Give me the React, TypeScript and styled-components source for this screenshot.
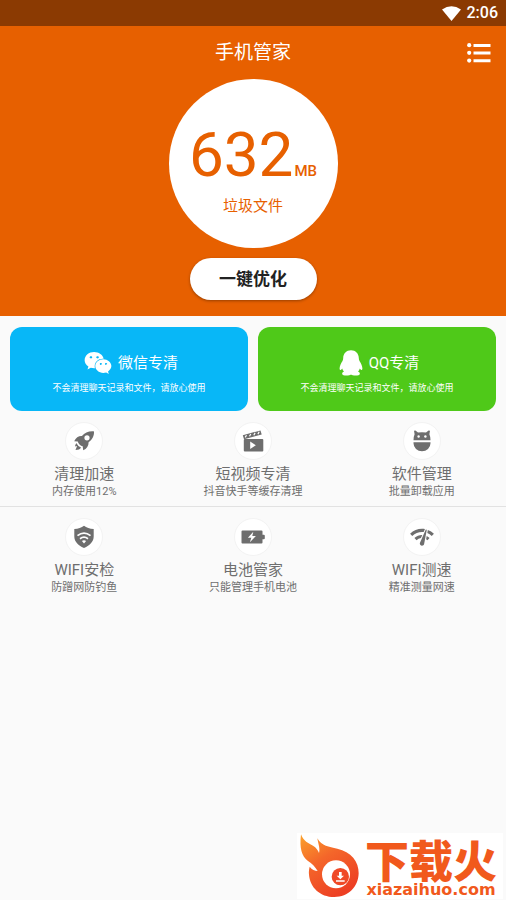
import React from "react";
import styled, { createGlobalStyle } from "styled-components";
import { FaWeixin } from "react-icons/fa";
import { MdNetworkCheck } from "react-icons/md";

const GlobalStyle = createGlobalStyle`
  *, *::before, *::after { box-sizing: border-box; }
  body {
    margin: 0;
    background: #fafafa;
    font-family: Roboto, "Noto Sans CJK SC", sans-serif;
  }
  button { font: inherit; border: 0; padding: 0; cursor: pointer; }
  h1, h2, p { margin: 0; font-weight: 400; }
`;

const Page = styled.div`
  min-height: 100vh;
  display: flex;
  flex-direction: column;
`;

const StatusBar = styled.div`
  height: 26px;
  padding: 0 8px;
  display: flex;
  align-items: center;
  justify-content: flex-end;
  gap: 6px;
  background: #8b3a02;
  color: #fff;
  font-size: 16px;
  font-weight: 500;
  line-height: 28px;
`;

const Hero = styled.header`
  display: flex;
  flex-direction: column;
  align-items: center;
  padding-bottom: 16px;
  background: #e76000;
`;

const TitleBar = styled.div`
  width: 100%;
  height: 53px;
  padding: 0 14px;
  display: grid;
  grid-template-columns: 1fr auto 1fr;
  align-items: center;
  color: #fff;
`;

const Title = styled.h1`
  grid-column: 2;
  font-size: 19px;
  line-height: 28px;
`;

const MenuButton = styled.button`
  justify-self: end;
  width: 26px;
  height: 24px;
  display: grid;
  place-items: center;
  background: none;
  color: #fff;
`;

const Gauge = styled.section`
  width: 169px;
  height: 169px;
  padding-top: 40px;
  display: flex;
  flex-direction: column;
  align-items: center;
  border-radius: 50%;
  background: #fff;
  color: #e76000;
`;

const Amount = styled.div`
  display: flex;
  align-items: baseline;
  gap: 1px;
  font-size: 62px;
  line-height: 72px;
`;

const Unit = styled.span`
  font-size: 15px;
  font-weight: 500;
  line-height: 20px;
`;

const GaugeLabel = styled.p`
  margin-top: 5px;
  font-size: 15px;
  line-height: 20px;
`;

const OptimizeButton = styled.button`
  width: 127px;
  height: 42px;
  margin-top: 10px;
  border-radius: 21px;
  background: #fff;
  color: #222;
  font-size: 17px;
  font-weight: 700;
  line-height: 42px;
  box-shadow: 0 1px 3px rgba(0, 0, 0, 0.35);
`;

const Cards = styled.section`
  display: grid;
  grid-template-columns: 1fr 1fr;
  gap: 10px;
  padding: 11px 10px 0;
`;

const Card = styled.button<{ $tone: string }>`
  height: 84px;
  padding-top: 8px;
  display: flex;
  flex-direction: column;
  align-items: center;
  justify-content: center;
  border-radius: 12px;
  background: ${(p) => p.$tone};
  color: #fff;
`;

const CardTitle = styled.span`
  display: flex;
  align-items: center;
  gap: 6px;
  padding-left: 4px;
  font-size: 15px;
  line-height: 30px;
`;

const CardNote = styled.span`
  font-size: 9px;
  line-height: 20px;
`;

const ToolRow = styled.section<{ $divided?: boolean }>`
  display: grid;
  grid-template-columns: repeat(3, 1fr);
  padding: 11px 0 6px;
  border-bottom: 1px solid ${(p) => (p.$divided ? "#e2e2e2" : "transparent")};
`;

const Tool = styled.button`
  display: flex;
  flex-direction: column;
  align-items: center;
  background: none;
  color: #6e6e6e;
`;

const ToolIcon = styled.span`
  width: 38px;
  height: 38px;
  margin-bottom: 4px;
  display: grid;
  place-items: center;
  border: 1px solid #f3f3f3;
  border-radius: 50%;
  background: #fff;
`;

const ToolName = styled.span`
  font-size: 15px;
  line-height: 20px;
`;

const ToolNote = styled.span`
  font-size: 11px;
  line-height: 16px;
`;

const Brand = styled.footer`
  align-self: flex-end;
  margin: auto 3px 1px 0;
  height: 66px;
  padding-right: 2px;
  display: flex;
  background: #fff;
  color: #f1591c;
`;

const BrandText = styled.div`
  display: flex;
  flex-direction: column;
  align-items: center;
  padding: 4px 4px 0;
`;

const BrandName = styled.strong`
  font-family: "Noto Sans CJK SC", sans-serif;
  font-size: 44px;
  font-weight: 900;
  line-height: 44px;
`;

const BrandUrl = styled.span`
  font-family: "DejaVu Sans", sans-serif;
  font-size: 16px;
  font-weight: 700;
  line-height: 18px;
`;

const WifiIcon = () => (
  <svg width="19" height="15" viewBox="0 0 19 15" fill="currentColor" aria-hidden="true">
    <path d="M0 3.4Q9.500 -3 19 3.400L9.500 15Z" />
  </svg>
);

const ListIcon = () => (
  <svg width="24" height="20" viewBox="0 0 24 20" fill="currentColor" aria-hidden="true">
    <circle cx="2.200" cy="2.200" r="2.100" />
    <circle cx="2.200" cy="9.800" r="2.100" />
    <circle cx="2.200" cy="17.600" r="2.100" />
    <path d="M6.500 1h17v3h-17zM6.500 8.400h17v3h-17zM6.500 16.200h17v3h-17z" />
  </svg>
);

const PenguinIcon = () => (
  <svg width="24" height="26" viewBox="0 0 24 26" fill="currentColor" aria-hidden="true">
    <path d="M12 .3C7.400.3 4.300 3.600 4.200 8c0 1.200-.2 2.100-.7 3.100C2 13.300.6 16.300.6 18.600c0 1.900 1 2 2.600-.2.3 1.200.9 2.300 1.800 3.200-1.300.6-2 1.300-1.800 2.300.2 1.300 1.900 1.700 4.300 1.700 2.100 0 3.600-.4 4.500-1 .9.600 2.400 1 4.500 1 2.400 0 4.100-.4 4.300-1.700.2-1-.5-1.700-1.800-2.300.9-.9 1.500-2 1.800-3.200 1.600 2.200 2.600 2.100 2.600.2 0-2.300-1.400-5.300-2.900-7.500-.5-1-.7-1.900-.7-3.100C19.700 3.600 16.600.3 12 .3z" />
  </svg>
);

const RocketIcon = () => (
  <svg width="22" height="22" viewBox="0 0 22 22" fill="currentColor" aria-hidden="true">
    <path
      fillRule="evenodd"
      d="M21 1.400C15.600 1 11.800 2.700 8.900 6 5.900 5.700 2.900 7.500 1.200 11.200l3.600.3c.2 1 .8 2 1.700 2.900 1 1 2 1.600 3.200 1.800l.5 4.100c3.600-1.500 5.500-4.500 5.400-8.100C19 9.500 21.300 6.300 21 1.400zM14 5.200a2.600 2.600 0 1 1 0 5.200 2.600 2.600 0 0 1 0-5.200z"
    />
    <path d="M3.700 13.200c-1.100.7-1.700 1.900-1.500 3.300l1.900-.5-1.600 4c2.700-.2 4.600-.6 5.500-2.500-1.900-.8-3.400-2.100-4.300-4.300z" />
  </svg>
);

const ClapperIcon = () => (
  <svg width="22" height="22" viewBox="0 0 22 22" aria-hidden="true">
    <path fill="currentColor" d="M.8 5.200 18.500.4l1.200 4.200L2 9.200z" />
    <path stroke="#fff" strokeWidth="1.200" d="m3.200 7.400 1.300-2.200M7.500 6.300l1.300-2.300M11.800 5.200l1.300-2.300M15.900 4.100 17.200 1.800" />
    <rect x="1.800" y="9" width="19.500" height="12.500" rx="1" fill="currentColor" />
    <path fill="#fff" d="m8.200 11.400 5.600 3.800-5.600 3.800z" />
  </svg>
);

const RobotIcon = () => (
  <svg width="18" height="22" viewBox="0 0 18 22" aria-hidden="true">
    <path
      fill="currentColor"
      d="M1 .8 2.400.4 5 2.600Q9 1.800 13 2.600L15.600.4 17 .8 16.400 4.200Q17.500 6.500 17.500 10.300H.5Q.5 6.500 1.600 4.200zM.5 12.200h17v1.100a8.500 8 0 0 1-17 0z"
    />
    <circle cx="5.600" cy="6.500" r="1.200" fill="#fff" />
    <circle cx="12.400" cy="6.500" r="1.200" fill="#fff" />
  </svg>
);

const ShieldIcon = () => (
  <svg width="22" height="24" viewBox="0 0 22 24" fill="none" aria-hidden="true">
    <path fill="currentColor" d="M11 .8c2.500 2 5.700 3.100 9.700 3.200v7.200c0 5.200-3.600 9-9.700 11.700-6.100-2.700-9.700-6.500-9.700-11.700V4C5.300 3.900 8.500 2.800 11 .8z" />
    <path stroke="#fff" strokeWidth="1.700" d="M4.500 10.700Q11 5.500 17.500 10.700M7 13.700Q11 10.700 15 13.700" />
    <path fill="#fff" d="M8.900 16q2.100-1.400 4.200 0L11 18.400z" />
  </svg>
);

const BatteryIcon = () => (
  <svg width="24" height="14" viewBox="0 0 24 14" aria-hidden="true">
    <path fill="currentColor" d="M1.500.5h19a1 1 0 0 1 1 1v3.200h1.300a1 1 0 0 1 1 1v2.600a1 1 0 0 1-1 1h-1.300v3.200a1 1 0 0 1-1 1h-19a1 1 0 0 1-1-1v-11a1 1 0 0 1 1-1z" />
    <path fill="#fff" d="M12.300 1.800 6.900 7.700h3.400l-1.400 4.600 6-6.200h-3.600z" />
  </svg>
);

const FlameLogo = () => (
  <svg width="64" height="66" viewBox="22 22 192 198" aria-hidden="true">
    <defs>
      <linearGradient id="flame" x1="0" y1="0" x2="0.600" y2="1">
        <stop offset="0" stopColor="#fba22c" />
        <stop offset="0.450" stopColor="#f4662a" />
        <stop offset="1" stopColor="#ed3f23" />
      </linearGradient>
    </defs>
    <path
      fill="url(#flame)"
      d="M34 26C42 48 56 52 70 60C80 66 85 74 88 82C92 70 86 56 83 38C97 62 117 63 143 69C184 78 208 108 207 143C206 184 176 214 134 214C91 214 61 185 58 147C57 139 58 131 60 123C67 132 75 135 84 136C76 123 67 114 55 106C36 92 29 68 34 26Z"
    />
    <circle cx="139" cy="146" r="42" fill="#fff" />
    <circle cx="152" cy="153" r="26" fill="#ef4927" />
    <path fill="#fff" d="M148 139h8v11h7l-11 11-11-11h7zM139 164h26v4h-26z" />
  </svg>
);

const tools = [
  [
    { name: "清理加速", note: "内存使用12%", icon: <RocketIcon /> },
    { name: "短视频专清", note: "抖音快手等缓存清理", icon: <ClapperIcon /> },
    { name: "软件管理", note: "批量卸载应用", icon: <RobotIcon /> },
  ],
  [
    { name: "WIFI安检", note: "防蹭网防钓鱼", icon: <ShieldIcon /> },
    { name: "电池管家", note: "只能管理手机电池", icon: <BatteryIcon /> },
    { name: "WIFI测速", note: "精准测量网速", icon: <MdNetworkCheck size={26} /> },
  ],
];

const cards = [
  { name: "微信专清", tone: "#08b7f7", icon: <FaWeixin size={28} /> },
  { name: "QQ专清", tone: "#4fc919", icon: <PenguinIcon /> },
];

export default function App() {
  return (
    <>
      <GlobalStyle />
      <Page>
        <StatusBar>
          <WifiIcon />
          <time>2:06</time>
        </StatusBar>
        <Hero>
          <TitleBar>
            <Title>手机管家</Title>
            <MenuButton aria-label="菜单">
              <ListIcon />
            </MenuButton>
          </TitleBar>
          <Gauge>
            <Amount>
              632<Unit>MB</Unit>
            </Amount>
            <GaugeLabel>垃圾文件</GaugeLabel>
          </Gauge>
          <OptimizeButton>一键优化</OptimizeButton>
        </Hero>
        <main>
          <Cards>
            {cards.map((card) => (
              <Card key={card.name} $tone={card.tone}>
                <CardTitle>
                  {card.icon}
                  {card.name}
                </CardTitle>
                <CardNote>不会清理聊天记录和文件，请放心使用</CardNote>
              </Card>
            ))}
          </Cards>
          {tools.map((row, index) => (
            <ToolRow key={index} $divided={index === 0}>
              {row.map((tool) => (
                <Tool key={tool.name}>
                  <ToolIcon>{tool.icon}</ToolIcon>
                  <ToolName>{tool.name}</ToolName>
                  <ToolNote>{tool.note}</ToolNote>
                </Tool>
              ))}
            </ToolRow>
          ))}
        </main>
        <Brand>
          <FlameLogo />
          <BrandText>
            <BrandName>下载火</BrandName>
            <BrandUrl>xiazaihuo.com</BrandUrl>
          </BrandText>
        </Brand>
      </Page>
    </>
  );
}
